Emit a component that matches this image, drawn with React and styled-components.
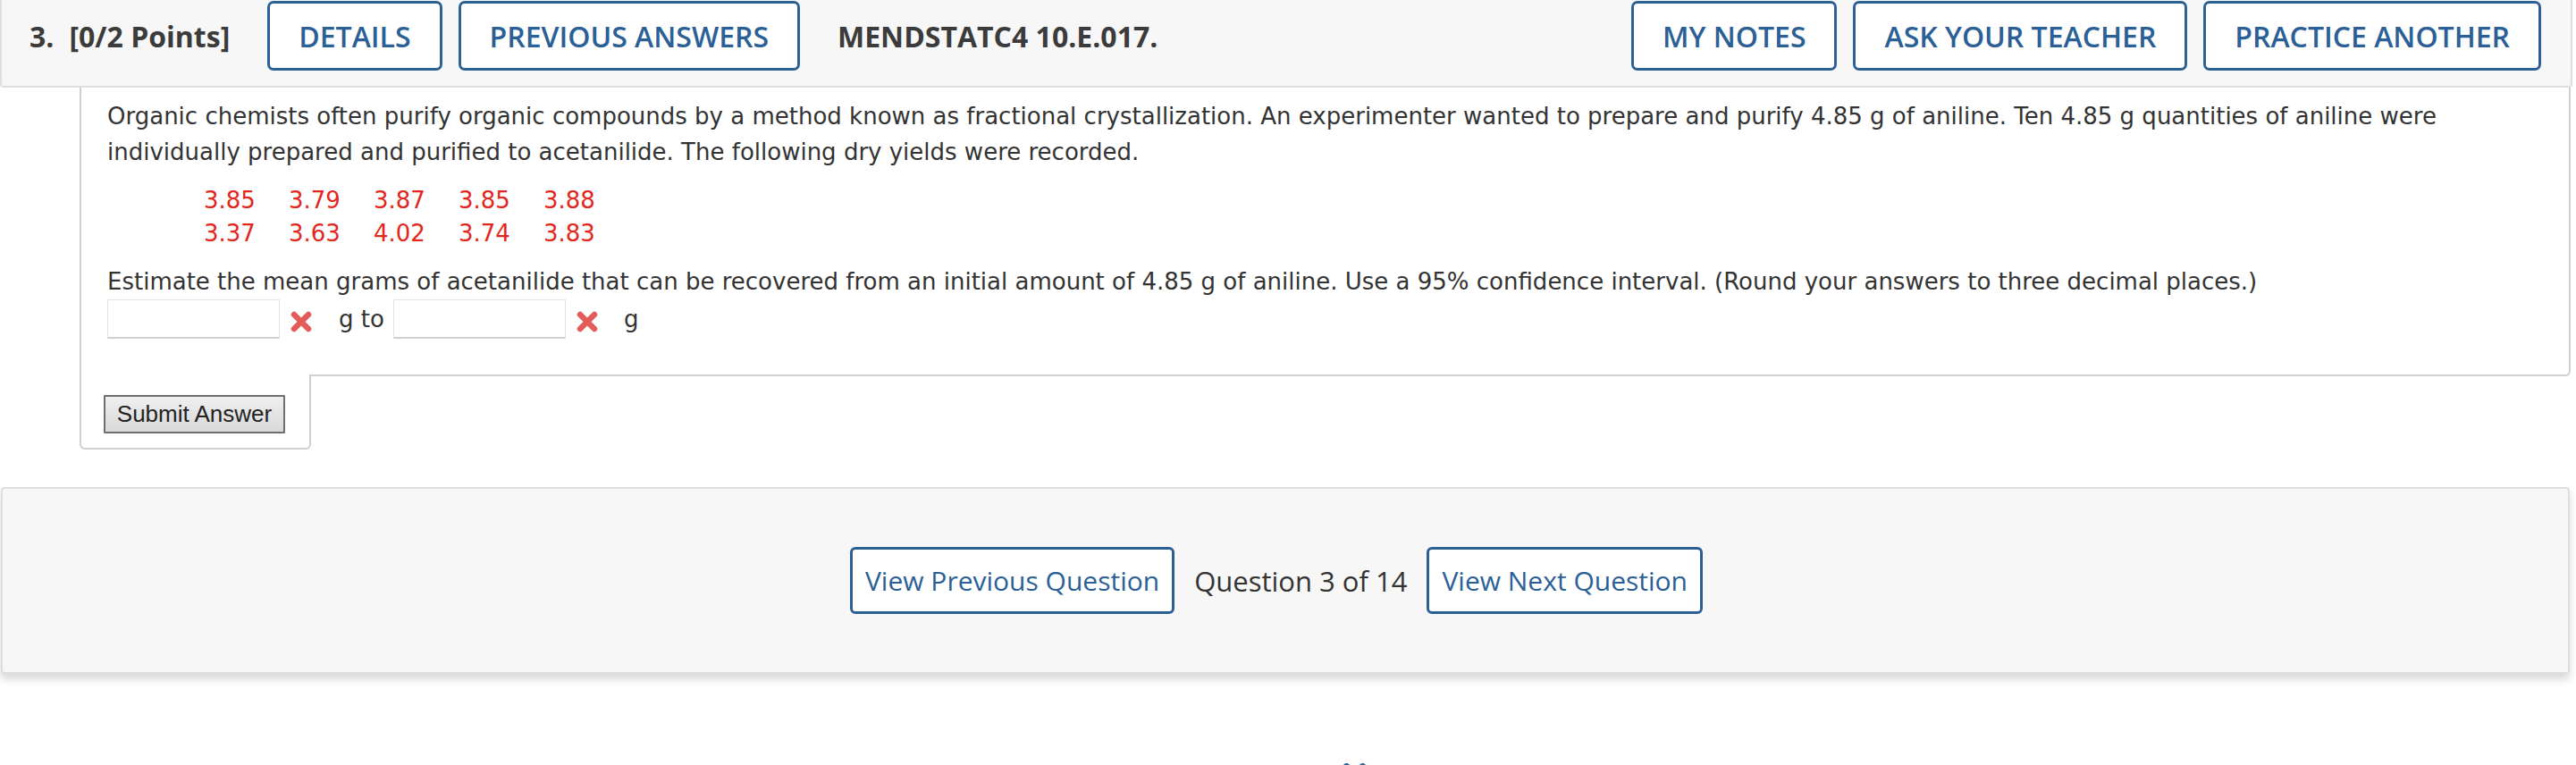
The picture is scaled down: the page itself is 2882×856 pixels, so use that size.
import React from 'react';
import styled, { createGlobalStyle } from 'styled-components';

const GlobalStyle = createGlobalStyle`
  html, body {
    margin: 0;
    padding: 0;
    background: #fff;
  }
  body {
    font-family: "DejaVu Sans", Verdana, sans-serif;
    color: #333;
  }
`;

const blue = '#2b6096';

const values = [
    ['3.85', '3.79', '3.87', '3.85', '3.88'],
    ['3.37', '3.63', '4.02', '3.74', '3.83'],
];

const XMark = () => (
    <XIcon viewBox="0 0 26 26">
        <path d="M5 5 L21 21 M21 5 L5 21" stroke="#e25c5c" strokeWidth="6.5" strokeLinecap="round" fill="none" />
    </XIcon>
);

const App = () => {
    return (
        <Page>
            <GlobalStyle />
            {/* Question header */}
            <Header>
                <HeaderText>
                    <Num>3.</Num>[0/2 Points]
                </HeaderText>
                <HeaderButton $ml={42}>DETAILS</HeaderButton>
                <HeaderButton $ml={18}>PREVIOUS ANSWERS</HeaderButton>
                <HeaderText $ml={42}>MENDSTATC4 10.E.017.</HeaderText>
                <RightGroup>
                    <HeaderButton>MY NOTES</HeaderButton>
                    <HeaderButton>ASK YOUR TEACHER</HeaderButton>
                    <HeaderButton>PRACTICE ANOTHER</HeaderButton>
                </RightGroup>
            </Header>

            {/* Question body */}
            <QuestionBox>
                <Text>
                    Organic chemists often purify organic compounds by a method known as fractional crystallization. An experimenter wanted to prepare and purify 4.85 g of aniline. Ten 4.85 g quantities of aniline were individually prepared and purified to acetanilide. The following dry yields were recorded.
                </Text>
                <Values>
                    {values.flat().map((v, i) => (
                        <span key={i}>{v}</span>
                    ))}
                </Values>
                <Text>
                    Estimate the mean grams of acetanilide that can be recovered from an initial amount of 4.85 g of aniline. Use a 95% confidence interval. (Round your answers to three decimal places.)
                </Text>
                <AnswerRow>
                    <AnswerInput />
                    <XMark />
                    <Unit $ml={29}>g to</Unit>
                    <AnswerInput />
                    <XMark />
                    <Unit $ml={28}>g</Unit>
                </AnswerRow>
            </QuestionBox>
            <SubmitTab>
                <SubmitButton>Submit Answer</SubmitButton>
            </SubmitTab>

            {/* Question navigation */}
            <NavPanel>
                <NavButton>View Previous Question</NavButton>
                <NavLabel>Question 3 of 14</NavLabel>
                <NavButton>View Next Question</NavButton>
            </NavPanel>

            <Footer>
                <svg width="26" height="8" viewBox="0 0 26 8">
                    <rect x="0" y="0" width="7" height="12" rx="3.5" fill={blue} />
                    <rect x="18" y="0" width="7" height="12" rx="3.5" fill={blue} />
                </svg>
            </Footer>
        </Page>
    );
};

export default App;

const Page = styled.div`
    width: 2882px;
    box-sizing: border-box;
    padding-right: 4px;
    overflow: hidden;
`;

// header bar
const Header = styled.div`
    display: flex;
    align-items: flex-start;
    box-sizing: border-box;
    height: 98px;
    padding: 1px 33px 0 31px;
    background: #f7f7f7;
    border: 2px solid #dedede;
    border-top: none;
    border-radius: 0 0 4px 4px;
`;

const HeaderText = styled.div`
    display: flex;
    align-items: center;
    height: 78px;
    margin-left: ${(p) => p.$ml || 0}px;
    font-family: "Open Sans", sans-serif;
    font-weight: 700;
    font-size: 32px;
    color: #3b3b3b;
    white-space: nowrap;
`;

const Num = styled.span`
    margin-right: 17px;
`;

const HeaderButton = styled.button`
    box-sizing: border-box;
    height: 78px;
    margin-left: ${(p) => p.$ml || 0}px;
    padding: 0 32px;
    background: #fff;
    border: 3px solid ${blue};
    border-radius: 7px;
    color: ${blue};
    font-family: "Open Sans", sans-serif;
    font-weight: 600;
    font-size: 32px;
    white-space: nowrap;
`;

const RightGroup = styled.div`
    display: flex;
    gap: 18px;
    margin-left: auto;
`;

// question content
const QuestionBox = styled.div`
    margin: 0 2px 0 89px;
    padding: 12px 29px 40px 29px;
    border: 2px solid #cfcfcf;
    border-top: none;
    border-radius: 0 0 6px 0;
    font-size: 26px;
    line-height: 40px;
    color: #333;
`;

const Text = styled.div``;

const Values = styled.div`
    display: grid;
    grid-template-columns: repeat(5, 95px);
    margin: 16px 0 15px 108px;
    line-height: 37px;
    color: #e2271d;
`;

const AnswerRow = styled.div`
    display: flex;
    align-items: center;
    height: 44px;
`;

const AnswerInput = styled.input`
    box-sizing: border-box;
    width: 193px;
    height: 44px;
    margin: 0 11px 0 0;
    border: 1px solid #e2e2e2;
    border-bottom: 2px solid #cfcfcf;
    background: #fff;
`;

const XIcon = styled.svg`
    width: 26px;
    height: 26px;
    margin-top: 6px;
`;

const Unit = styled.span`
    margin: 0 10px 0 ${(p) => p.$ml}px;
`;

const SubmitTab = styled.div`
    position: relative;
    box-sizing: border-box;
    width: 259px;
    margin: -2px 0 0 89px;
    padding: 23px 26px 16px 25px;
    background: #fff;
    border: 2px solid #cfcfcf;
    border-top: none;
    border-radius: 0 0 6px 6px;
`;

const SubmitButton = styled.button`
    box-sizing: border-box;
    width: 203px;
    height: 43px;
    padding: 0;
    border: 2px solid #6f6f6f;
    border-radius: 1px;
    background: linear-gradient(#efefef, #d9d9d9);
    font-family: "Liberation Sans", Arial, sans-serif;
    font-size: 26px;
    color: #222;
`;

// navigation
const NavPanel = styled.div`
    display: flex;
    align-items: center;
    justify-content: center;
    gap: 22px;
    box-sizing: border-box;
    height: 209px;
    margin: 42px 3px 0 1px;
    padding-right: 20px;
    background: #f7f7f7;
    border: 2px solid #dedede;
    border-radius: 4px;
    box-shadow: 0 6px 10px rgba(0, 0, 0, 0.16);
`;

const NavButton = styled.button`
    box-sizing: border-box;
    height: 75px;
    padding: 0 14px;
    background: #fff;
    border: 3px solid ${blue};
    border-radius: 6px;
    color: ${blue};
    font-family: "Open Sans", sans-serif;
    font-size: 30px;
    white-space: nowrap;
`;

const NavLabel = styled.span`
    font-family: "Open Sans", sans-serif;
    font-size: 31px;
    color: #333;
`;

const Footer = styled.div`
    display: flex;
    justify-content: center;
    margin-top: 100px;
    padding-left: 154px;
    height: 40px;
`;
